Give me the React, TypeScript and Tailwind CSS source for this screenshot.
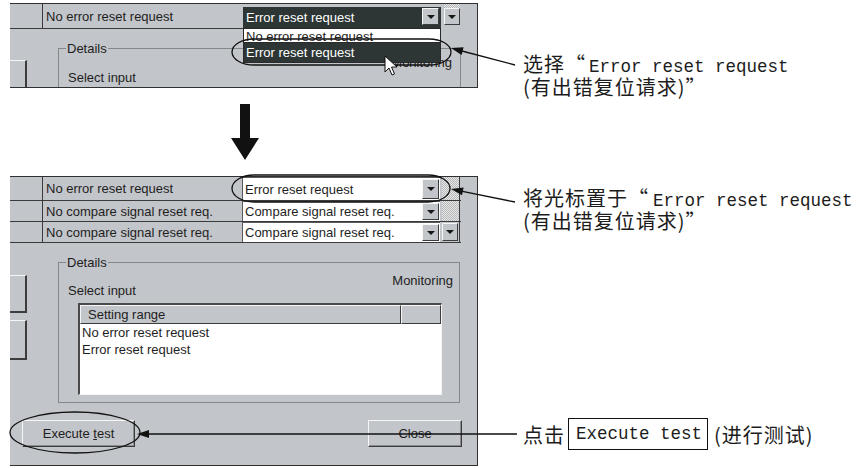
import React from 'react';

const ui = "font-['Liberation_Sans',Arial,sans-serif] text-[13px] leading-[15px] text-[#1e1e1e]";
const cjk = "font-['Noto_Sans_CJK_SC','Noto_Sans_CJK_JP',sans-serif] text-[20px] leading-[23px] tracking-[1px]";
const mono = "font-['Liberation_Mono','Courier_New',monospace] text-[17.5px]";
const raised = 'border border-t-[#f6f6f6] border-l-[#f6f6f6] border-r-[#3c3c3c] border-b-[#3c3c3c]';
const hatch = 'bg-[repeating-conic-gradient(#b4b6b8_0%_25%,#e8e8e8_0%_50%)] bg-[length:2px_2px]';

const DropBtn: React.FC<{ className?: string }> = ({ className = '' }) => (
  <div className={`flex items-center justify-center bg-[#c2c5c9] ${raised} ${className}`}>
    <span className="block w-0 h-0 border-x-[4px] border-x-transparent border-t-[4px] border-t-[#161616]" />
  </div>
);

const GroupLabel: React.FC = () => (
  <div className="flex h-[14px]">
    <div className="w-[8px] h-[7px] self-end border-t border-l border-[#85888b]" />
    <span className="px-[1px]">Details</span>
    <div className="flex-1 h-[7px] self-end border-t border-r border-[#85888b]" />
  </div>
);

const Stub: React.FC<{ className?: string }> = ({ className = '' }) => (
  <div className={`w-[17px] border-t border-t-[#f6f6f6] border-r-2 border-r-[#3c3c3c] ${className}`} />
);

const TopShot: React.FC = () => (
  <div className={`relative h-[85px] w-[468px] mt-[3px] bg-[#c2c5c9] border-t border-r border-b border-[#303030] overflow-hidden ${ui}`}>
    <div className="flex h-[25px]">
      <div className="w-[33px] border-r border-b border-[#3a3a3a]" />
      <div className="w-[200px] flex items-center pl-[3px] border-b border-[#3a3a3a]">No error reset request</div>
      <div className="w-[198px] pt-[3px] pb-[1px]">
        <div className="relative h-full flex items-center pl-[3px] bg-[#2d3634] text-white">
          Error reset request
          <DropBtn className="absolute right-[2px] top-[1px] w-[17px] h-[17px]" />
        </div>
      </div>
      <div className="w-[3px]" />
      <div className="w-[16px] flex flex-col">
        <div className={`h-[4px] ${hatch}`} />
        <DropBtn className="h-[17px]" />
      </div>
    </div>
    <div className="flex">
      <Stub className="mt-[31px] h-[40px]" />
      <div className="ml-[31px] mt-[12px] w-[403px]">
        <GroupLabel />
        <div className="h-[60px] border-l border-r border-[#85888b] flex justify-between">
          <span className="mt-[15px] pl-[9px]">Select input</span>
          <span className="mt-[0px] pr-[8px]">Monitoring</span>
        </div>
      </div>
    </div>
    {/* open dropdown list */}
    <div className="absolute left-[233px] top-[24px] w-[198px] h-[35px] bg-white border border-[#2a2a2a] flex flex-col">
      <div className="h-[14px] overflow-hidden border-b border-[#2a2a2a] pl-[2px] leading-[13px] pt-[1px]">No error reset request</div>
      <div className="flex-1 flex items-center pl-[2px] bg-[#2d3634] text-white">Error reset request</div>
    </div>
  </div>
);

const Row: React.FC<{ left: string; value: string; h: string; scroll: 'hatch' | 'btn' }> = ({ left, value, h, scroll }) => (
  <div className={`flex ${h} border-b border-[#3a3a3a]`}>
    <div className="w-[33px] border-r border-[#3a3a3a]" />
    <div className="w-[199px] flex items-center pl-[3px]">{left}</div>
    <div className="w-[198px] relative flex items-center pl-[2px] bg-white border-t border-l border-[#5a5a5a]">
      {value}
      <DropBtn className="absolute right-[1px] top-[1px] bottom-[1px] w-[17px]" />
    </div>
    <div className="w-[2px] bg-[#c2c5c9]" />
    {scroll === 'hatch' ? (
      <div className={`w-[18px] ${hatch} border-r border-[#3a3a3a]`} />
    ) : (
      <div className="w-[18px] border-r border-[#3a3a3a] bg-[#c2c5c9] flex items-center">
        <DropBtn className="w-[16px] h-[18px]" />
      </div>
    )}
  </div>
);

const BottomShot: React.FC = () => (
  <div className={`h-[290px] w-[468px] bg-[#c2c5c9] border-t border-r border-b border-[#303030] flex flex-col ${ui}`}>
    <div className="w-[451px]">
      <Row left="No error reset request" value="Error reset request" h="h-[24px]" scroll="hatch" />
      <Row left="No compare signal reset req." value="Compare signal reset req." h="h-[21px]" scroll="hatch" />
      <Row left="No compare signal reset req." value="Compare signal reset req." h="h-[21px]" scroll="btn" />
    </div>
    <div className="flex">
      <div className="flex flex-col pt-[32px]">
        <Stub className="h-[38px] border-b-2 border-b-[#3c3c3c]" />
        <Stub className="mt-[7px] h-[40px] border-b-2 border-b-[#3c3c3c]" />
      </div>
      <div className="ml-[31px] mt-[12px] w-[402px]">
        <GroupLabel />
        <div className="h-[134px] border-l border-r border-b border-[#85888b] flex flex-col">
          <div className="flex justify-between">
            <span className="mt-[14px] pl-[9px]">Select input</span>
            <span className="mt-[4px] pr-[6px]">Monitoring</span>
          </div>
          <div className="ml-[19px] mt-[5px] w-[364px] h-[92px] bg-white border-t-2 border-l-2 border-t-[#4a4a4a] border-l-[#4a4a4a] border-r border-b border-r-[#f6f6f6] border-b-[#f6f6f6] flex flex-col">
            <div className="flex h-[19px]">
              <div className={`w-[321px] bg-[#c2c5c9] ${raised} pl-[7px] flex items-center`}>Setting range</div>
              <div className={`flex-1 bg-[#c2c5c9] ${raised}`} />
            </div>
            <div className="pl-[2px] leading-[17px]">
              <div>No error reset request</div>
              <div>Error reset request</div>
            </div>
          </div>
        </div>
      </div>
    </div>
    <div className="flex justify-between pl-[12px] pr-[15px] mt-[17px]">
      <button className={`w-[113px] h-[27px] bg-[#c2c5c9] ${raised} shadow-[inset_-1px_-1px_0_#8a8d90]`}>
        Execute <span className="underline">t</span>est
      </button>
      <button className={`w-[94px] h-[27px] bg-[#c2c5c9] ${raised} shadow-[inset_-1px_-1px_0_#8a8d90]`}>Close</button>
    </div>
  </div>
);

// one annotation line; the mono run is set short so its baseline meets the CJK one
const Note: React.FC<{ children: React.ReactNode }> = ({ children }) => (
  <div className="flex items-end h-[23px] whitespace-nowrap">{children}</div>
);

export default function App() {
  return (
    <div className="relative w-[859px] h-[468px] bg-white overflow-hidden flex text-[#1c1c1c]">
      <div className="w-[478px] pl-[10px] flex flex-col">
        <TopShot />
        <div className="h-[88px]">
          <svg width="468" height="88" viewBox="0 0 468 88">
            <polygon points="230,16 240,16 240,50 249,50 235,72 221,50 230,50" fill="#111" />
          </svg>
        </div>
        <BottomShot />
      </div>

      <div className="flex-1 pl-[45px] flex flex-col">
        <div className="mt-[52px]">
          <Note><span className={cjk}>选择“</span><span className={`ml-[3px] leading-[15px] ${mono}`}>Error reset request</span></Note>
          <Note><span className={cjk}>(有出错复位请求)”</span></Note>
        </div>
        <div className="mt-[88px]">
          <Note><span className={cjk}>将光标置于“</span><span className={`ml-[4px] leading-[15px] ${mono}`}>Error reset request</span></Note>
          <Note><span className={cjk}>(有出错复位请求)”</span></Note>
        </div>
        <div className="mt-[186px] flex items-center h-[32px] whitespace-nowrap">
          <span className={cjk}>点击</span>
          <span className={`ml-[3px] h-[32px] flex items-center border border-[#111] pl-[7px] pr-[5px] leading-[20px] ${mono}`}>Execute test</span>
          <span className={`ml-[6px] ${cjk}`}>(进行测试)</span>
        </div>
      </div>

      {/* callout marks drawn over the screenshots */}
      <svg className="absolute inset-0 pointer-events-none" width="859" height="468" viewBox="0 0 859 468">
        <g fill="none" stroke="#111" strokeWidth="1.3">
          <rect x="232" y="39" width="219" height="26" rx="22" ry="13" />
          <rect x="232" y="175" width="218" height="27" rx="22" ry="13.5" />
          <ellipse cx="75" cy="432.5" rx="65" ry="20.5" />
          <line x1="515" y1="65" x2="460" y2="50.5" />
          <line x1="515" y1="202" x2="460" y2="190.8" />
          <line x1="517" y1="434" x2="146" y2="434" />
        </g>
        <g fill="#111">
          <polygon points="451,48 463.6,47.2 461.6,55" />
          <polygon points="451,189 463.6,187.5 462,195.3" />
          <polygon points="137,434 149,430 149,438" />
        </g>
        <path
          d="M385 56 L385 72 L389 68 L392 75 L394.5 74 L391.5 67 L397 67 Z"
          fill="#fff"
          stroke="#111"
          strokeWidth="1"
          strokeLinejoin="round"
        />
      </svg>
    </div>
  );
}
